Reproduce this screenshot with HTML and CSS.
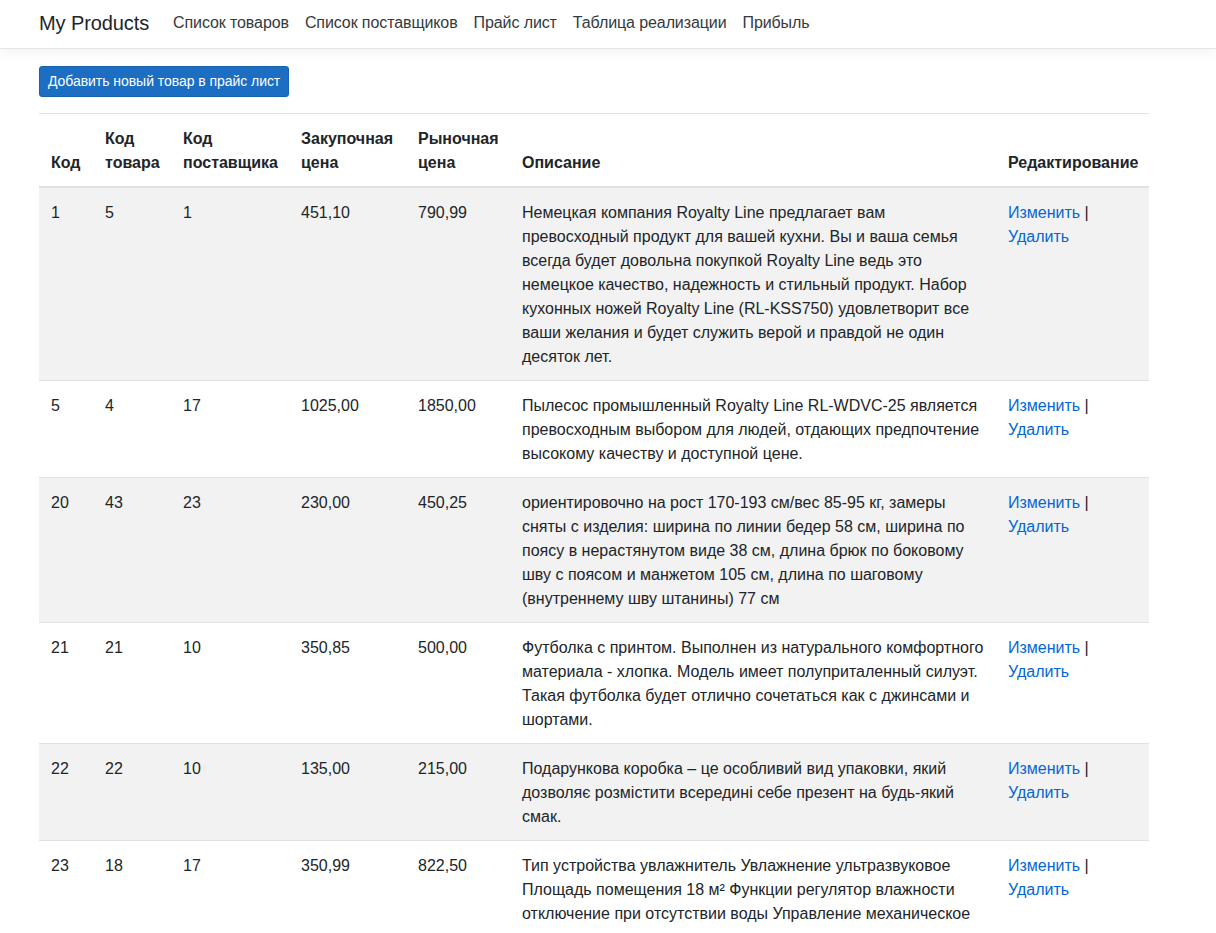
FILE: index.html
```html
<!DOCTYPE html>
<html lang="ru">
<head>
<meta charset="utf-8">
<title>Прайс лист - My Products</title>
<link rel="stylesheet" href="styles.css">
</head>
<body>
<header class="navbar">
  <div class="nav-inner">
    <a class="brand" href="#">My Products</a>
    <ul class="nav-links">
      <li><a href="#">Список товаров</a></li>
      <li><a href="#">Список поставщиков</a></li>
      <li><a href="#">Прайс лист</a></li>
      <li><a href="#">Таблица реализации</a></li>
      <li><a href="#">Прибыль</a></li>
    </ul>
  </div>
</header>
<main class="container">
  <p class="actions"><a class="btn" href="#">Добавить новый товар в прайс лист</a></p>
  <table class="table">
    <colgroup>
      <col class="c1"><col class="c2"><col class="c3"><col class="c4"><col class="c5"><col class="c6"><col class="c7">
    </colgroup>
    <thead>
      <tr>
        <th>Код</th>
        <th>Код товара</th>
        <th>Код поставщика</th>
        <th>Закупочная цена</th>
        <th>Рыночная цена</th>
        <th>Описание</th>
        <th>Редактирование</th>
      </tr>
    </thead>
    <tbody>
      <tr>
        <td>1</td><td>5</td><td>1</td><td>451,10</td><td>790,99</td>
        <td>Немецкая компания Royalty Line предлагает вам превосходный продукт для вашей кухни. Вы и ваша семья всегда будет довольна покупкой Royalty Line ведь это немецкое качество, надежность и стильный продукт. Набор кухонных ножей Royalty Line (RL-KSS750) удовлетворит все ваши желания и будет служить верой и правдой не один десяток лет.</td>
        <td><a href="#">Изменить</a> | <a href="#">Удалить</a></td>
      </tr>
      <tr>
        <td>5</td><td>4</td><td>17</td><td>1025,00</td><td>1850,00</td>
        <td>Пылесос промышленный Royalty Line RL-WDVC-25 является превосходным выбором для людей, отдающих предпочтение высокому качеству и доступной цене.</td>
        <td><a href="#">Изменить</a> | <a href="#">Удалить</a></td>
      </tr>
      <tr>
        <td>20</td><td>43</td><td>23</td><td>230,00</td><td>450,25</td>
        <td>ориентировочно на рост 170-193 см/вес 85-95 кг, замеры сняты с изделия: ширина по линии бедер 58 см, ширина по поясу в нерастянутом виде 38 см, длина брюк по боковому шву с поясом и манжетом 105 см, длина по шаговому (внутреннему шву штанины) 77 см</td>
        <td><a href="#">Изменить</a> | <a href="#">Удалить</a></td>
      </tr>
      <tr>
        <td>21</td><td>21</td><td>10</td><td>350,85</td><td>500,00</td>
        <td>Футболка с принтом. Выполнен из натурального комфортного материала - хлопка. Модель имеет полуприталенный силуэт. Такая футболка будет отлично сочетаться как с джинсами и шортами.</td>
        <td><a href="#">Изменить</a> | <a href="#">Удалить</a></td>
      </tr>
      <tr>
        <td>22</td><td>22</td><td>10</td><td>135,00</td><td>215,00</td>
        <td>Подарункова коробка – це особливий вид упаковки, який дозволяє розмістити всередині себе презент на будь-який смак.</td>
        <td><a href="#">Изменить</a> | <a href="#">Удалить</a></td>
      </tr>
      <tr>
        <td>23</td><td>18</td><td>17</td><td>350,99</td><td>822,50</td>
        <td>Тип устройства увлажнитель Увлажнение ультразвуковое Площадь помещения 18 м² Функции регулятор влажности отключение при отсутствии воды Управление механическое</td>
        <td><a href="#">Изменить</a> | <a href="#">Удалить</a></td>
      </tr>
    </tbody>
  </table>
</main>
</body>
</html>
```

FILE: styles.css
```css
html, body {
  margin: 0;
  padding: 0;
}
body {
  font-family: "Liberation Sans", Arial, sans-serif;
  font-size: 16px;
  line-height: 1.5;
  color: #212529;
  background: #fff;
}
a {
  color: #0366d6;
  text-decoration: none;
}
.navbar {
  height: 48px;
  background: #fff;
  border-bottom: 1px solid #e5e5e5;
  box-shadow: 0 4px 12px rgba(0, 0, 0, 0.05);
  margin-bottom: 16px;
}
.nav-inner {
  width: 1110px;
  margin-left: 39px;
  height: 46px;
  display: flex;
  align-items: center;
}
.brand {
  font-size: 20px;
  letter-spacing: -0.1px;
  color: #212529;
  margin-right: 16px;
  line-height: 30px;
}
.nav-links {
  list-style: none;
  margin: 0;
  padding: 0;
  display: flex;
}
.nav-links a {
  display: block;
  padding: 0 8px;
  color: #343a40;
  font-size: 16px;
  letter-spacing: -0.1px;
  line-height: 24px;
}
.container {
  width: 1110px;
  margin-left: 39px;
}
.actions {
  margin: 0 0 16px 0;
  padding-top: 1px;
}
.btn {
  display: inline-block;
  font-size: 14px;
  letter-spacing: -0.05px;
  line-height: 21px;
  padding: 4px 8px;
  color: #fff;
  background: #1b6ec2;
  border: 1px solid #1861ac;
  border-radius: 3px;
}
.table {
  width: 1110px;
  border-collapse: collapse;
  table-layout: fixed;
  margin-bottom: 16px;
}
.c1 { width: 54px; }
.c2 { width: 78px; }
.c3 { width: 118px; }
.c4 { width: 117px; }
.c5 { width: 104px; }
.c6 { width: 486px; }
.c7 { width: 153px; }
.table th,
.table td {
  padding: 13px 12px 11px;
  border-top: 1px solid #dee2e6;
  vertical-align: top;
  text-align: left;
}
.table th {
  font-weight: bold;
  vertical-align: bottom;
  border-bottom: 2px solid #dee2e6;
}
.table tbody tr:nth-child(odd) {
  background: #f2f2f2;
}
```
